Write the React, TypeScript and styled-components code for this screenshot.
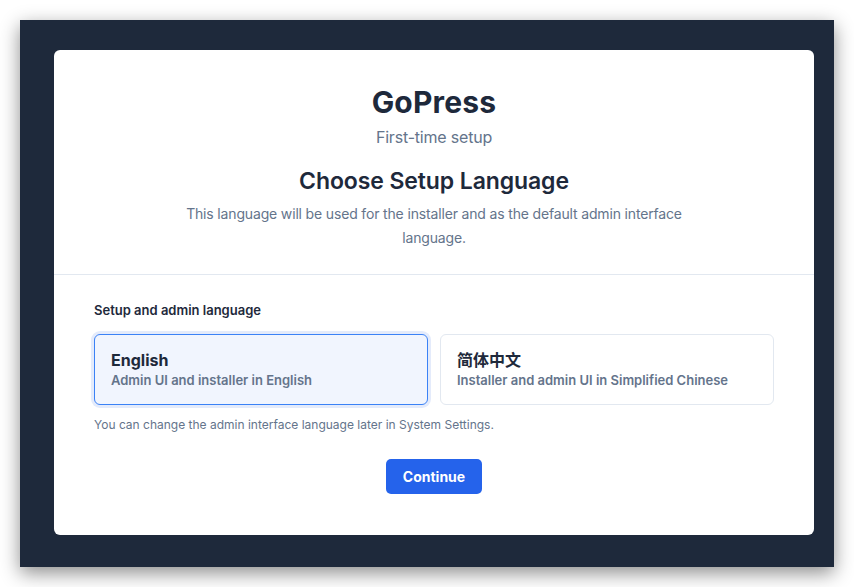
import { useState } from "react";
import styled, { createGlobalStyle } from "styled-components";

const GlobalStyle = createGlobalStyle`
  body {
    margin: 0;
    background: #ffffff;
    font-family: Inter, "Noto Sans", "Noto Sans CJK SC", sans-serif;
    -webkit-font-smoothing: antialiased;
  }
`;

const Page = styled.div`
  padding: 20px;
  height: 587px;
  box-sizing: border-box;
`;

const Frame = styled.div`
  background: #1e293b;
  height: 547px;
  box-sizing: border-box;
  padding: 30px 20px 32px 34px;
  box-shadow: 0 6px 18px rgba(0, 0, 0, 0.45);
`;

const Card = styled.div`
  background: #ffffff;
  border-radius: 6px;
  height: 100%;
  box-sizing: border-box;
  display: flex;
  flex-direction: column;
`;

const Header = styled.header`
  padding: 34px 40px 24px;
  text-align: center;
  border-bottom: 1px solid #e2e8f0;
`;

const Brand = styled.h1`
  margin: 0;
  font-size: 30px;
  line-height: 36px;
  font-weight: 700;
  letter-spacing: 0.2px;
  color: #1e293b;
`;

const Tagline = styled.p`
  margin: 5px 0 0;
  font-size: 16px;
  line-height: 24px;
  letter-spacing: -0.2px;
  color: #64748b;
`;

const Heading = styled.h2`
  margin: 17px 0 0;
  font-size: 23px;
  line-height: 30px;
  font-weight: 600;
  letter-spacing: -0.1px;
  color: #1e293b;
`;

const Lead = styled.p`
  margin: 6px auto 0;
  max-width: 520px;
  font-size: 14px;
  line-height: 24px;
  letter-spacing: -0.16px;
  color: #64748b;
`;

const Body = styled.section`
  padding: 25px 40px 0;
  display: flex;
  flex-direction: column;
`;

const Label = styled.div`
  font-size: 13px;
  line-height: 20px;
  font-weight: 600;
  color: #1e293b;
`;

const Options = styled.div`
  margin-top: 14px;
  display: grid;
  grid-template-columns: 1fr 1fr;
  gap: 12px;
`;

const Option = styled.button<{ $active: boolean }>`
  all: unset;
  cursor: pointer;
  box-sizing: border-box;
  height: 71px;
  padding: 14px 16px 15px;
  border-radius: 6px;
  border: 1px solid ${(p) => (p.$active ? "#3b82f6" : "#e2e8f0")};
  background: ${(p) => (p.$active ? "#f1f5fe" : "#ffffff")};
  box-shadow: ${(p) => (p.$active ? "0 0 0 3px #e4ebfb" : "none")};
  display: flex;
  flex-direction: column;
`;

const OptionTitle = styled.span`
  font-size: 16px;
  line-height: 22px;
  font-weight: 700;
  color: #1e293b;
`;

const OptionDesc = styled.span`
  font-size: 13px;
  line-height: 18px;
  font-weight: 600;
  color: #64748b;
`;

const Note = styled.p`
  margin: 11px 0 0;
  font-size: 12px;
  line-height: 18px;
  color: #64748b;
`;

const Actions = styled.div`
  margin-top: 25px;
  display: flex;
  justify-content: center;
`;

const Primary = styled.button`
  border: none;
  cursor: pointer;
  height: 35px;
  padding: 0 17px;
  border-radius: 5px;
  background: #2563eb;
  color: #ffffff;
  font-family: inherit;
  font-size: 14px;
  font-weight: 700;
`;

const languages = [
  { id: "en", name: "English", desc: "Admin UI and installer in English" },
  { id: "zh", name: "简体中文", desc: "Installer and admin UI in Simplified Chinese" },
];

const App = () => {
  const [lang, setLang] = useState("en");
  return (
    <>
      <GlobalStyle />
      <Page>
        <Frame>
          <Card>
            <Header>
              <Brand>GoPress</Brand>
              <Tagline>First-time setup</Tagline>
              <Heading>Choose Setup Language</Heading>
              <Lead>
                This language will be used for the installer and as the default admin interface
                language.
              </Lead>
            </Header>
            <Body>
              <Label>Setup and admin language</Label>
              <Options>
                {languages.map((l) => (
                  <Option key={l.id} $active={lang === l.id} onClick={() => setLang(l.id)}>
                    <OptionTitle>{l.name}</OptionTitle>
                    <OptionDesc>{l.desc}</OptionDesc>
                  </Option>
                ))}
              </Options>
              <Note>You can change the admin interface language later in System Settings.</Note>
              <Actions>
                <Primary>Continue</Primary>
              </Actions>
            </Body>
          </Card>
        </Frame>
      </Page>
    </>
  );
};

export default App;
